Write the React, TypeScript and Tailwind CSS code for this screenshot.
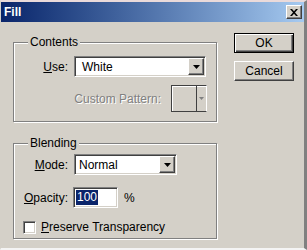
import React from 'react';

const sunken =
  'border border-t-[#808080] border-l-[#808080] border-b-white border-r-white shadow-[inset_1px_1px_0_#404040,inset_-1px_-1px_0_#d4d0c8]';
const raised =
  'border border-t-white border-l-white border-r-[#404040] border-b-[#404040] shadow-[inset_-1px_-1px_0_#808080]';

const DownArrow: React.FC<{ color?: string }> = ({ color = '#000' }) => (
  <svg width="7" height="4" viewBox="0 0 7 4">
    <path d="M0 0h7L3.5 4z" fill={color} />
  </svg>
);

const Select: React.FC<{ value: string; width: string; textPad: string }> = ({ value, width, textPad }) => (
  <div className={`${width} h-[21px] bg-white flex items-center ${sunken}`}>
    <span className={`flex-1 ${textPad} text-[12px] leading-none`}>{value}</span>
    <div className={`w-[16px] h-[17px] mr-[1px] bg-[#d4d0c8] flex items-center justify-center ${raised}`}>
      <DownArrow />
    </div>
  </div>
);

const Group: React.FC<{ label: string; height: string; children: React.ReactNode }> = ({ label, height, children }) => (
  <div className={`relative ${height} border border-[#808080] shadow-[inset_1px_1px_0_#fff,1px_1px_0_#fff]`}>
    <span className="absolute left-[14px] -top-[8px] px-[2px] bg-[#d4d0c8] leading-[14px] text-[12px]">{label}</span>
    {children}
  </div>
);

export default function App() {
  return (
    <div className="w-[307px] h-[250px] bg-[#d4d0c8] font-['Liberation_Sans',Arial,sans-serif] text-[11px] text-black flex flex-col border-t-2 border-t-[#eadada] border-l border-l-[#d4d0c8] border-r-[3px] border-r-[#808080] border-b-2 border-b-[#f4f4f4] overflow-hidden">
      {/* title bar */}
      <div className="h-[20px] shrink-0 flex items-center justify-between pl-[3px] pr-[2px] bg-linear-to-r from-[#0a246a] to-[#a6caf0]">
        <span className="text-white font-bold text-[12px] leading-none">Fill</span>
        <div className={`w-[16px] h-[14px] bg-[#d4d0c8] flex items-center justify-center ${raised}`}>
          <svg width="8" height="7" viewBox="0 0 8 7">
            <path d="M0 0h2l2 2.3L6 0h2L5 3.5 8 7H6L4 4.7 2 7H0l3-3.5z" fill="#000" />
          </svg>
        </div>
      </div>

      <div className="flex flex-1 pl-[12px]">
        {/* left column */}
        <div className="w-[204px] pt-[20px] flex flex-col gap-[21px]">
          <Group label="Contents" height="h-[80px]">
            <div className="mt-[13px] flex items-center">
              <span className="w-[60px] pr-[6px] text-right text-[12px]">
                <span className="underline">U</span>se:
              </span>
              <Select value="White" width="w-[132px]" textPad="pl-[7px]" />
            </div>
            <div className="mt-[8px] flex items-center">
              <span className="w-[157px] pr-[10px] text-right text-[12px] text-[#808080] [text-shadow:1px_1px_0_#fff]">
                Custom Pattern:
              </span>
              <div className="w-[36px] h-[27px] flex border border-[#404040] border-r-white shadow-[inset_1px_1px_0_#fff]">
                <div className="flex-1" />
                <div className="w-[10px] border-l border-[#404040] flex items-center justify-center">
                  <svg width="5" height="3" viewBox="0 0 5 3">
                    <path d="M0 0h5L2.5 3z" fill="#808080" />
                  </svg>
                </div>
              </div>
            </div>
          </Group>

          <Group label="Blending" height="h-[96px]">
            <div className="mt-[10px] flex items-center">
              <span className="w-[60px] pr-[6px] text-right text-[12px]">
                <span className="underline">M</span>ode:
              </span>
              <Select value="Normal" width="w-[103px]" textPad="pl-[4px]" />
            </div>
            <div className="mt-[12px] flex items-center">
              <span className="w-[59px] pr-[5px] text-right text-[12px]">
                <span className="underline">O</span>pacity:
              </span>
              <div className={`w-[45px] h-[21px] bg-white flex items-center pl-[2px] ${sunken}`}>
                <span className="bg-[#0a246a] text-white text-[12px] leading-[15px] px-[1px]">100</span>
              </div>
              <span className="ml-[6px] text-[12px]">%</span>
            </div>
            <div className="mt-[10px] flex items-center pl-[9px]">
              <div className={`w-[13px] h-[13px] bg-white ${sunken}`} />
              <span className="ml-[5px] text-[12px]">
                <span className="underline">P</span>reserve Transparency
              </span>
            </div>
          </Group>
        </div>

        {/* right column */}
        <div className="ml-[17px] pt-[11px] flex flex-col gap-[8px]">
          <button className="w-[60px] h-[20px] bg-[#d4d0c8] border border-black shadow-[inset_1px_1px_0_#fff,inset_-1px_-1px_0_#404040,inset_-2px_-2px_0_#808080] text-[12px] leading-none">
            OK
          </button>
          <button className={`w-[60px] h-[20px] bg-[#d4d0c8] text-[12px] leading-none ${raised}`}>Cancel</button>
        </div>
      </div>
    </div>
  );
}
